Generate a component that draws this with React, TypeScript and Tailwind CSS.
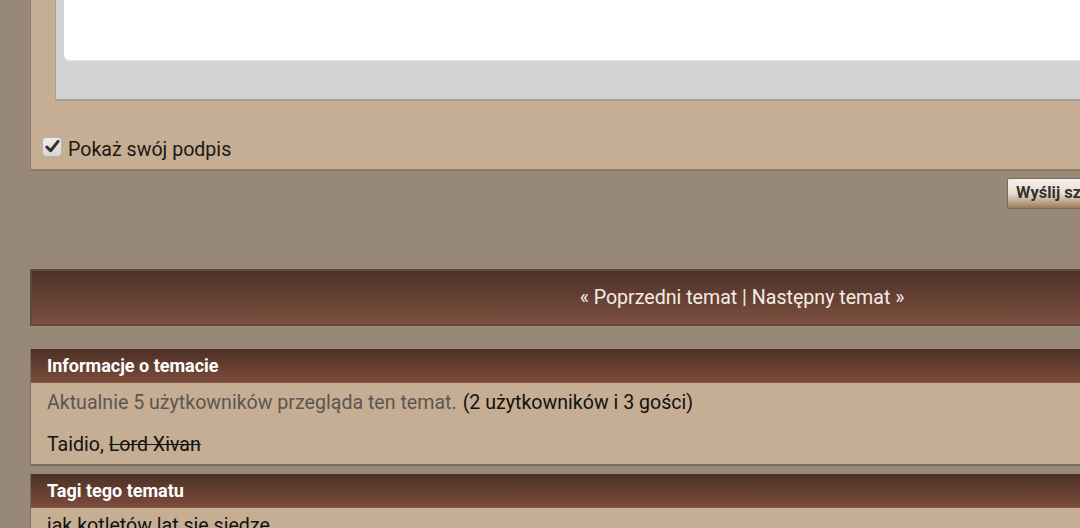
import React from "react";

function SectionHeader({ title }: { title: string }) {
  return (
    <div className="h-[34px] flex items-center pl-[16px] bg-gradient-to-b from-[#4d3026] to-[#7b4c3c] text-white font-bold text-[18px] border-b border-[#8a5a46]">
      {title}
    </div>
  );
}

export default function App() {
  return (
    <div className="w-[1080px] h-[528px] overflow-hidden bg-[#978877] font-['Roboto',sans-serif]">
      <div className="w-[1424px] ml-[30px]">
        {/* Quick reply box */}
        <div className="h-[171px] bg-[#c5ae93] border-l border-b-2 border-[#8d7c69]">
          <div className="ml-[24px] h-[101px] bg-[#d3d3d3] border-l border-b-2 border-[#aaa299] pl-[8px]">
            <div className="h-[61px] bg-white rounded-bl-[6px] border-b border-[#e6e6e6]" />
          </div>
          <div className="flex items-center ml-[11px] mt-[33px]">
            <span className="w-[20px] h-[20px] rounded-[4px] bg-gradient-to-b from-[#f0eeeb] to-[#d9d5d0] border border-[#b9b2a9] flex items-center justify-center">
              <svg viewBox="0 0 16 16" className="w-[15px] h-[15px]">
                <path d="M2 8.5 L6 12.5 L14 2.5" fill="none" stroke="#2f2f2f" strokeWidth="3.2" strokeLinecap="round" strokeLinejoin="round" />
              </svg>
            </span>
            <span className="ml-[6px] text-[19.6px] text-[#1d1813] leading-none pt-[6px]">
              Pokaż swój podpis
            </span>
          </div>
        </div>

        {/* Submit button row */}
        <div className="h-[98px] pt-[7px]">
          <button className="ml-[977px] h-[31px] px-[8px] border border-[#7c6c5b] rounded-[2px] bg-gradient-to-b from-[#f4f0ea] via-[#e6ded4] to-[#9c7c5a] text-[#383028] font-bold text-[16.5px] whitespace-nowrap">
            Wyślij szybką odpowiedź
          </button>
        </div>

        {/* Prev / next */}
        <div className="h-[57px] flex items-center justify-center bg-gradient-to-b from-[#4e3128] to-[#7e5040] border-2 border-[#5c4b3e] text-[#f4ede6] text-[19.6px] pt-[1px]">
          « Poprzedni temat | Następny temat »
        </div>

        {/* Topic info */}
        <div className="mt-[23px] border-l border-b-2 border-[#7d6d5c] bg-[#c5ae93]">
          <SectionHeader title="Informacje o temacie" />
          <div className="pl-[16px] text-[19.6px] h-[81px]">
            <div className="h-[40px] flex items-center">
              <span className="text-[#5d5650]">Aktualnie 5 użytkowników przegląda ten temat.</span>
              <span className="text-[#15110d] ml-[6px]">(2 użytkowników i 3 gości)</span>
            </div>
            <div className="h-[41px] flex items-center text-[#15110d] pt-[3px]">
              Taidio,&nbsp;<span className="line-through">Lord Xivan</span>
            </div>
          </div>
        </div>

        {/* Tags */}
        <div className="mt-[8px] border-l border-[#7d6d5c] bg-[#c5ae93]">
          <SectionHeader title="Tagi tego tematu" />
          <div className="pl-[16px] text-[19.6px] text-[#15110d] h-[40px] pt-[3px]">
            jak kotletów lat się siedze
          </div>
        </div>
      </div>
    </div>
  );
}
